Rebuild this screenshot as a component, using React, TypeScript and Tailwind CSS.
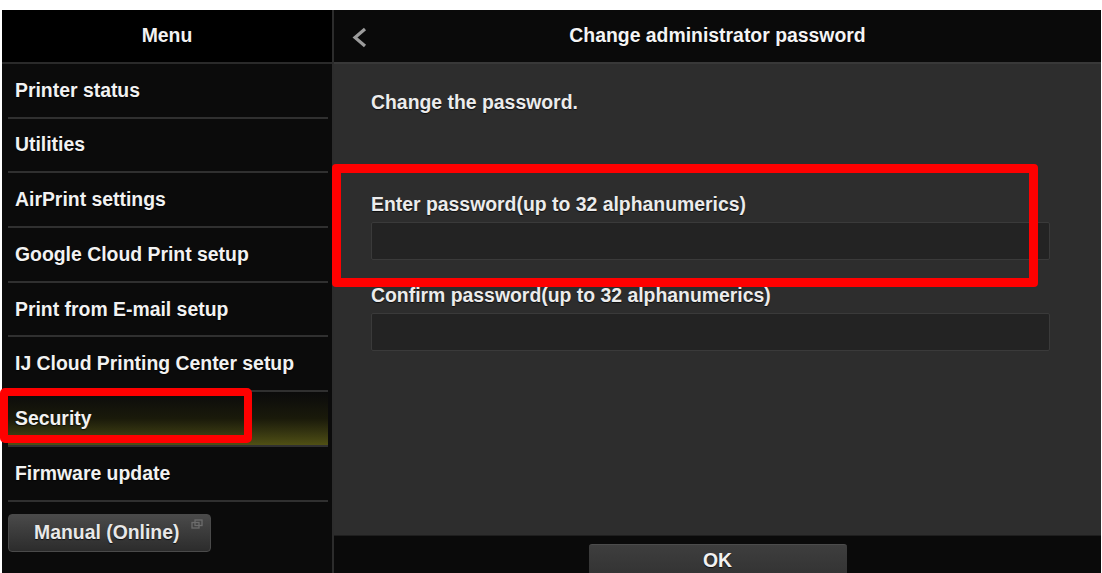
const menuItems = [
  "Printer status",
  "Utilities",
  "AirPrint settings",
  "Google Cloud Print setup",
  "Print from E-mail setup",
  "IJ Cloud Printing Center setup",
  "Security",
  "Firmware update",
];

const font = "font-['Liberation_Sans',Arial,sans-serif] font-bold";
const shadow = "[text-shadow:0_1px_1px_rgba(0,0,0,0.7)]";

export default function App() {
  return (
    <div className={`relative h-[573px] w-[1102px] overflow-hidden bg-white pt-[10px] pl-[2px] pr-[1px] ${font}`}>
      <div className="flex h-[563px]">
        <Sidebar />
        <Main />
      </div>

      {/* annotation boxes */}
      <div className="absolute left-0 top-[388px] h-[55px] w-[252px] rounded-[5px] border-[8px] border-[#ff0000]" />
      <div className="absolute left-[332px] top-[164px] h-[123px] w-[706px] rounded-[4px] border-[9px] border-[#ff0000]" />
    </div>
  );
}

function Sidebar() {
  return (
    <aside className="flex w-[332px] shrink-0 flex-col border-r-2 border-[#2c2c2c] bg-[#0b0b0b]">
      <div className={`flex h-[54px] shrink-0 items-center justify-center border-b-2 border-[#2a2a2a] bg-black text-[19.4px] text-[#f2f2f2] ${shadow}`}>
        Menu
      </div>
      <ul className="flex flex-col">
        {menuItems.map((item) => (
          <MenuItem key={item} label={item} active={item === "Security"} />
        ))}
      </ul>
      <div className="px-[6px] pt-[12px]">
        <button className="relative flex h-[38px] w-[203px] items-center rounded-[4px] border border-[#4a4a4a] bg-gradient-to-b from-[#4a4a4a] to-[#2c2c2c] pl-[25px] text-[19.4px] text-[#e8e8e8]">
          <span className={shadow}>Manual (Online)</span>
          <svg className="absolute right-[7px] top-[4px]" width="12" height="10" viewBox="0 0 12 10" fill="none" stroke="#6c6c6c" strokeWidth="1.3">
            <rect x="1" y="3.5" width="7" height="5.5" />
            <rect x="4" y="1" width="7" height="5.5" />
          </svg>
        </button>
      </div>
    </aside>
  );
}

function MenuItem({ label, active }: { label: string; active: boolean }) {
  return (
    <li
      className={`ml-[6px] mr-[4px] flex h-[54.7px] items-center border-b-2 border-[#303030] pl-[7px] text-[19.4px] text-[#f2f2f2] ${
        active ? "bg-gradient-to-b from-[#0b0b0b] via-[#1a1a0a] to-[#505014]" : ""
      }`}
    >
      <span className={shadow}>{label}</span>
    </li>
  );
}

function Main() {
  return (
    <main className="flex flex-1 flex-col bg-[#2d2d2d]">
      <header className="relative flex h-[54px] shrink-0 items-center justify-center border-b-2 border-[#383838] bg-[#0a0a0a]">
        <svg className="absolute left-[17px] top-[17px]" width="18" height="21" viewBox="0 0 18 21" fill="none">
          <polyline points="14,2 4,10.5 14,19" stroke="#9c9c9c" strokeWidth="3.2" strokeLinejoin="miter" />
        </svg>
        <h1 className={`text-[19.4px] text-[#f4f4f4] ${shadow}`}>Change administrator password</h1>
      </header>

      <section className="flex-1 pl-[37px] pr-[51px] pt-[27px]">
        <p className={`text-[19.4px] leading-[22px] text-[#ececec] ${shadow}`}>Change the password.</p>

        <div className="mt-[80px] flex flex-col">
          <label className={`text-[19.4px] leading-[22px] text-[#ececec] ${shadow}`}>
            Enter password(up to 32 alphanumerics)
          </label>
          <div className="mt-[7px] h-[38px] rounded-[2px] border border-[#3a3a3a] bg-[#232323]" />
        </div>

        <div className="mt-[24px] flex flex-col">
          <label className={`text-[19.4px] leading-[22px] text-[#ececec] ${shadow}`}>
            Confirm password(up to 32 alphanumerics)
          </label>
          <div className="mt-[7px] h-[38px] rounded-[2px] border border-[#3a3a3a] bg-[#232323]" />
        </div>
      </section>

      <footer className="flex h-[38px] shrink-0 justify-center overflow-hidden border-t border-[#1e1e1e] bg-[#0a0a0a] pt-[8px]">
        <button className="flex h-[40px] w-[258px] shrink-0 items-start justify-center rounded-[3px] border-t border-[#4c4c4c] bg-gradient-to-b from-[#3e3e3e] to-[#303030] pt-[5px] text-[19.4px] leading-[20px] text-[#f2f2f2]">
          <span className={shadow}>OK</span>
        </button>
      </footer>
    </main>
  );
}
